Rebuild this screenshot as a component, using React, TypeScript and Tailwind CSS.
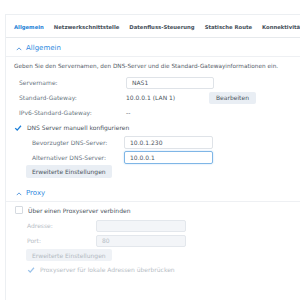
const tabs = ["Allgemein", "Netzwerkschnittstelle", "Datenfluss-Steuerung", "Statische Route", "Konnektivität"];

function Chevron() {
  return (
    <svg className="w-[6px] h-[6px] text-[#4a90d9]" viewBox="0 0 8 8" fill="none" stroke="currentColor" strokeWidth={1.2}>
      <path d="M1 5.5L4 2.5L7 5.5" />
    </svg>
  );
}

function Check({ muted }: { muted?: boolean }) {
  return (
    <svg className={`w-[8px] h-[8px] ${muted ? "text-[#9cc3ea]" : "text-[#1c7fd8]"}`} viewBox="0 0 10 10" fill="none" stroke="currentColor" strokeWidth={1.6}>
      <path d="M1.5 5.2L4 7.6L8.7 2.2" />
    </svg>
  );
}

function SectionHeader({ title }: { title: string }) {
  return (
    <div className="flex items-center gap-[4px] pl-[10px] h-[16px] border-b border-[#eef0f3] text-[7px] text-[#2f8ae0]">
      <Chevron />
      <span>{title}</span>
    </div>
  );
}

function Row({ label, children, indent }: { label: string; children: React.ReactNode; indent?: boolean }) {
  return (
    <div className={`flex items-center h-[15px] ${indent ? "pl-[26px]" : "pl-[13px]"}`}>
      <span className={`${indent ? "w-[92px]" : "w-[107px]"} text-[#6a7682]`}>{label}</span>
      {children}
    </div>
  );
}

export default function App() {
  return (
    <div className="w-[300px] h-[300px] bg-white overflow-hidden pt-[14px] pl-[5px] text-[6px] text-[#4b5560]" style={{ fontFamily: '"DejaVu Sans", Verdana, sans-serif' }}>
      <div className="h-full border-l border-t border-[#eceff2]">
        <div className="flex items-center h-[23px] pt-[4px] gap-[10px] pl-[8px] border-b border-[#e6e9ec] font-bold text-[5.3px] whitespace-nowrap">
          {tabs.map((t, i) => (
            <span key={t} className={i === 0 ? "text-[#1d7fd6]" : "text-[#46505a]"}>{t}</span>
          ))}
        </div>

        <div className="pt-[3px]">
          <SectionHeader title="Allgemein" />
          <div className="pl-[8px] h-[18px] flex items-center whitespace-nowrap text-[5.75px] text-[#56606a]">
            Geben Sie den Servernamen, den DNS-Server und die Standard-Gatewayinformationen ein.
          </div>
          <Row label="Servername:">
            <div className="w-[88px] h-[12px] border border-[#dfe3e8] rounded-[2px] flex items-center pl-[5px]">NAS1</div>
          </Row>
          <Row label="Standard-Gateway:">
            <span className="w-[83px]">10.0.0.1 (LAN 1)</span>
            <button className="h-[12px] px-[7px] rounded-[2px] bg-[#e9eef4] text-[#4b5560]">Bearbeiten</button>
          </Row>
          <Row label="IPv6-Standard-Gateway:">
            <span>--</span>
          </Row>
          <div className="flex items-center gap-[5px] pl-[8px] h-[15px]">
            <Check />
            <span>DNS Server manuell konfigurieren</span>
          </div>
          <Row label="Bevorzugter DNS-Server:" indent>
            <div className="w-[89px] h-[13px] border border-[#dfe3e8] rounded-[2px] flex items-center pl-[5px]">10.0.1.230</div>
          </Row>
          <Row label="Alternativer DNS-Server:" indent>
            <div className="w-[89px] h-[13px] border border-[#7fb6e6] rounded-[2px] flex items-center pl-[5px] shadow-[0_0_2px_#b9daf5]">10.0.0.1</div>
          </Row>
          <div className="pl-[20px]">
            <button className="h-[13px] px-[6px] rounded-[2px] bg-[#e9eef4] text-[#4b5560]">Erweiterte Einstellungen</button>
          </div>
        </div>

        <div className="pt-[8px]">
          <SectionHeader title="Proxy" />
          <div className="flex items-center gap-[5px] pl-[9px] h-[16px]">
            <span className="w-[8px] h-[8px] border border-[#d5dae0] rounded-[1px] bg-white" />
            <span>Über einen Proxyserver verbinden</span>
          </div>
          <div className="text-[#b7bec6]">
            <div className="flex items-center h-[15px] pl-[21px]">
              <span className="w-[69px]">Adresse:</span>
              <div className="w-[90px] h-[12px] border border-[#e3e7ec] rounded-[2px] bg-[#f3f5f8]" />
            </div>
            <div className="flex items-center h-[15px] pl-[21px]">
              <span className="w-[69px]">Port:</span>
              <div className="w-[90px] h-[12px] border border-[#e3e7ec] rounded-[2px] bg-[#f3f5f8] flex items-center pl-[5px]">80</div>
            </div>
            <div className="pl-[20px] pt-[1px]">
              <button className="h-[12px] px-[6px] rounded-[2px] bg-[#eff2f6] text-[#b3bac2]">Erweiterte Einstellungen</button>
            </div>
            <div className="flex items-center gap-[5px] pl-[21px] h-[17px]">
              <Check muted />
              <span>Proxyserver für lokale Adressen überbrücken</span>
            </div>
          </div>
        </div>
      </div>
    </div>
  );
}
